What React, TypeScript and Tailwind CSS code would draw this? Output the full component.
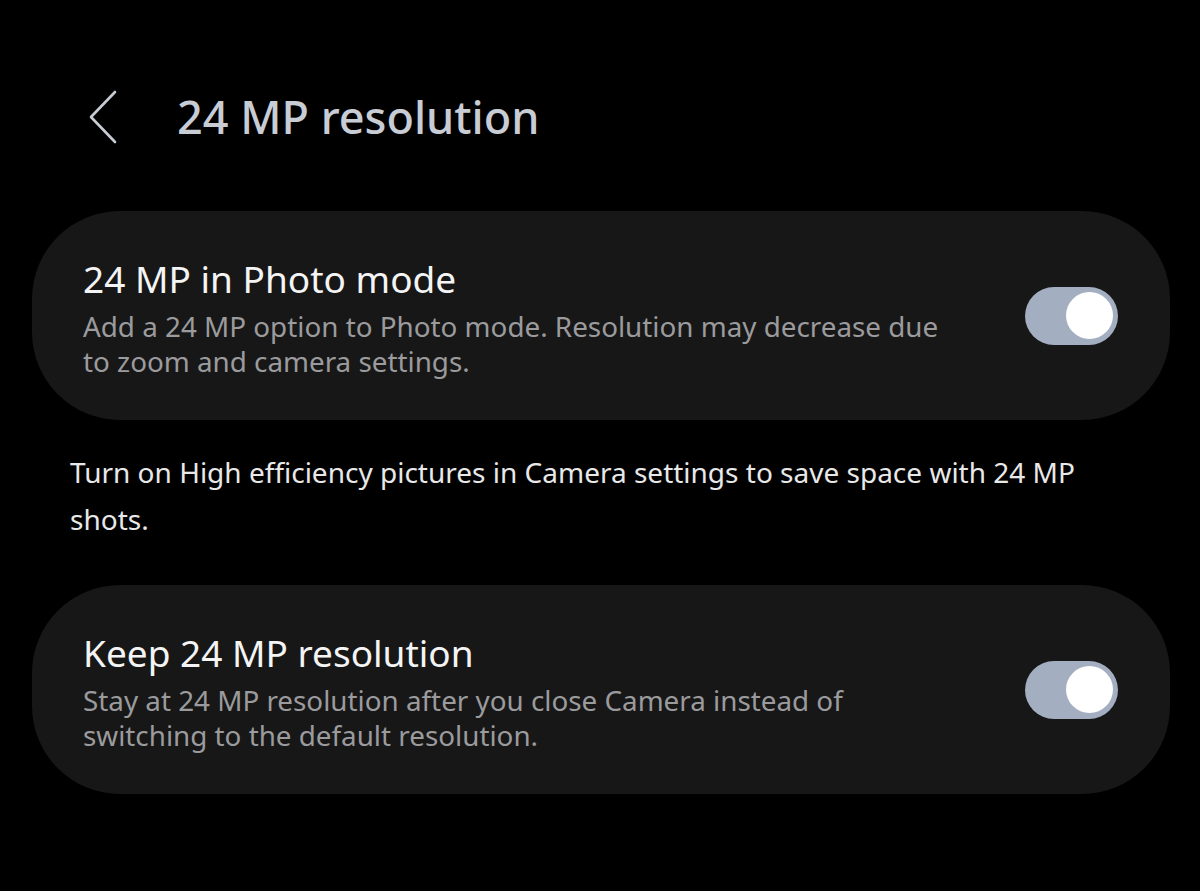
const FONT = { fontFamily: '"Noto Sans", "Open Sans", sans-serif' };

function Toggle() {
  return (
    <div className="flex h-[58px] w-[93px] shrink-0 items-center justify-end rounded-full bg-[#a3afc1] pr-[5px]">
      <div className="h-[47px] w-[47px] rounded-full bg-white" />
    </div>
  );
}

function SettingCard({ title, desc }: { title: string; desc: string[] }) {
  return (
    <div className="flex h-[209px] items-center justify-between rounded-[88px] bg-[#171718] pl-[51px] pr-[52px]">
      <div className="flex flex-col pt-[4px]">
        <div className="text-[37px] leading-[44px] text-[#f4f4f4]">{title}</div>
        <div className="mt-[8px] text-[27.8px] leading-[35px] text-[#9b9b9d]">
          {desc.map((line) => (
            <div key={line}>{line}</div>
          ))}
        </div>
      </div>
      <Toggle />
    </div>
  );
}

export default function App() {
  return (
    <div className="h-[891px] w-full overflow-hidden bg-black pl-[32px] pr-[30px] pt-[89px]" style={FONT}>
      <header className="flex h-[56px] items-center">
        <svg
          className="ml-[56px]"
          width="30"
          height="54"
          viewBox="0 0 30 54"
          fill="none"
          stroke="#c7cbd4"
          strokeWidth="2.6"
          strokeLinecap="round"
          strokeLinejoin="round"
        >
          <path d="M27 2 L3 27 L27 52" />
        </svg>
        <h1 className="ml-[59px] text-[45px] font-medium leading-[56px] text-[#c8ccd5]">
          24 MP resolution
        </h1>
      </header>

      <div className="mt-[66px]">
        <SettingCard
          title="24 MP in Photo mode"
          desc={[
            "Add a 24 MP option to Photo mode. Resolution may decrease due",
            "to zoom and camera settings.",
          ]}
        />
      </div>

      <p className="mt-[29px] pl-[38px] pr-[60px] text-[28px] leading-[47px] text-[#e8e8e8]">
        Turn on High efficiency pictures in Camera settings to save space with 24 MP shots.
      </p>

      <div className="mt-[42px]">
        <SettingCard
          title="Keep 24 MP resolution"
          desc={[
            "Stay at 24 MP resolution after you close Camera instead of",
            "switching to the default resolution.",
          ]}
        />
      </div>
    </div>
  );
}
